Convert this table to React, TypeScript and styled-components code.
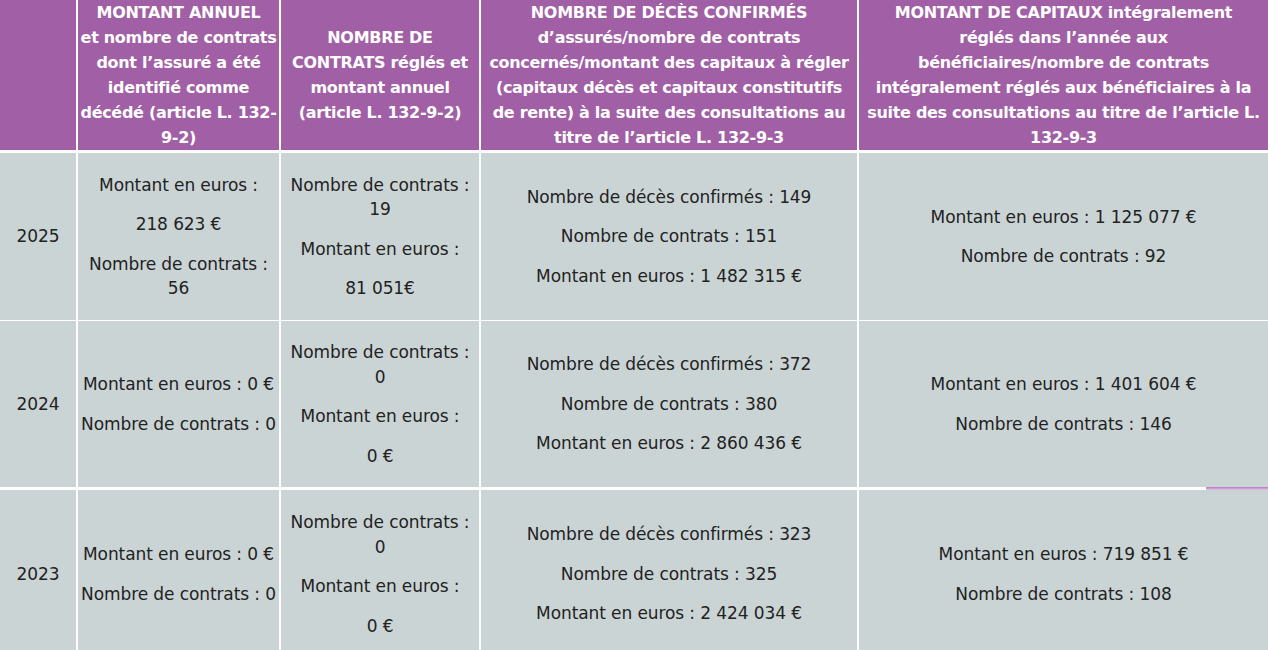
import styled, { createGlobalStyle } from "styled-components";

const GlobalStyle = createGlobalStyle`
  html, body {
    margin: 0;
    padding: 0;
    background: #ffffff;
  }
  body {
    font-family: "DejaVu Sans", "Noto Sans", sans-serif;
    overflow: hidden;
  }
`;

const COLUMNS = "76px 201px 198px 376px 1fr";

const Table = styled.div`
  width: 1268px;
  display: flex;
  flex-direction: column;
  background: #ffffff;
`;

const Row = styled.div<{ $height: number; $gap: number; $accent?: boolean }>`
  position: relative;
  display: grid;
  grid-template-columns: ${COLUMNS};
  column-gap: 2px;
  height: ${(p) => p.$height}px;
  margin-top: ${(p) => p.$gap}px;

  ${(p) =>
    p.$accent &&
    `
    &::before {
      content: "";
      position: absolute;
      right: 0;
      top: -3px;
      width: 62px;
      height: 3px;
      background: linear-gradient(#b47cbc, #e6c2e8);
    }
  `}
`;

const HeadCell = styled.div`
  background: #a160a5;
  color: #ffffff;
  display: flex;
  align-items: center;
  justify-content: center;
  text-align: center;
  font-size: 16px;
  font-weight: 700;
  line-height: 25px;
  letter-spacing: -0.3px;
  white-space: pre-line;
`;

const BodyCell = styled.div`
  background: #cbd4d5;
  color: #222222;
  display: flex;
  flex-direction: column;
  align-items: center;
  justify-content: center;
  gap: 15px;
  text-align: center;
  font-size: 17px;
  line-height: 24.5px;
  letter-spacing: -0.1px;
`;

const Para = styled.p`
  margin: 0;
  white-space: pre-line;
`;

const headers = [
  "",
  "MONTANT ANNUEL\net nombre de contrats\ndont l’assuré a été\nidentifié comme\ndécédé (article L. 132-\n9-2)",
  "NOMBRE DE\nCONTRATS réglés et\nmontant annuel\n(article L. 132-9-2)",
  "NOMBRE DE DÉCÈS CONFIRMÉS\nd’assurés/nombre de contrats\nconcernés/montant des capitaux à régler\n(capitaux décès et capitaux constitutifs\nde rente) à la suite des consultations au\ntitre de l’article L. 132-9-3",
  "MONTANT DE CAPITAUX intégralement\nréglés dans l’année aux\nbénéficiaires/nombre de contrats\nintégralement réglés aux bénéficiaires à la\nsuite des consultations au titre de l’article L.\n132-9-3",
];

type YearRow = {
  year: string;
  height: number;
  gap: number;
  accent?: boolean;
  cells: string[][];
};

const rows: YearRow[] = [
  {
    year: "2025",
    height: 167,
    gap: 3,
    cells: [
      ["Montant en euros :", "218 623 €", "Nombre de contrats :\n56"],
      ["Nombre de contrats :\n19", "Montant en euros :", "81 051€"],
      [
        "Nombre de décès confirmés : 149",
        "Nombre de contrats : 151",
        "Montant en euros :  1 482 315 €",
      ],
      ["Montant en euros :  1 125 077 €", "Nombre de contrats : 92"],
    ],
  },
  {
    year: "2024",
    height: 166,
    gap: 1,
    cells: [
      ["Montant en euros : 0 €", "Nombre de contrats : 0"],
      ["Nombre de contrats :\n0", "Montant en euros :", "0 €"],
      [
        "Nombre de décès confirmés : 372",
        "Nombre de contrats : 380",
        "Montant en euros : 2 860 436 €",
      ],
      ["Montant en euros :  1 401 604 €", "Nombre de contrats : 146"],
    ],
  },
  {
    year: "2023",
    height: 168,
    gap: 3,
    accent: true,
    cells: [
      ["Montant en euros : 0 €", "Nombre de contrats : 0"],
      ["Nombre de contrats :\n0", "Montant en euros :", "0 €"],
      [
        "Nombre de décès confirmés : 323",
        "Nombre de contrats : 325",
        "Montant en euros : 2 424 034 €",
      ],
      ["Montant en euros : 719 851 €", "Nombre de contrats : 108"],
    ],
  },
];

function App() {
  return (
    <>
      <GlobalStyle />
      <Table>
        <Row $height={150} $gap={0}>
          {headers.map((h, i) => (
            <HeadCell key={i}>{h}</HeadCell>
          ))}
        </Row>
        {rows.map((r) => (
          <Row key={r.year} $height={r.height} $gap={r.gap} $accent={r.accent}>
            <BodyCell>
              <Para>{r.year}</Para>
            </BodyCell>
            {r.cells.map((cell, i) => (
              <BodyCell key={i}>
                {cell.map((p, j) => (
                  <Para key={j}>{p}</Para>
                ))}
              </BodyCell>
            ))}
          </Row>
        ))}
      </Table>
    </>
  );
}

export default App;
